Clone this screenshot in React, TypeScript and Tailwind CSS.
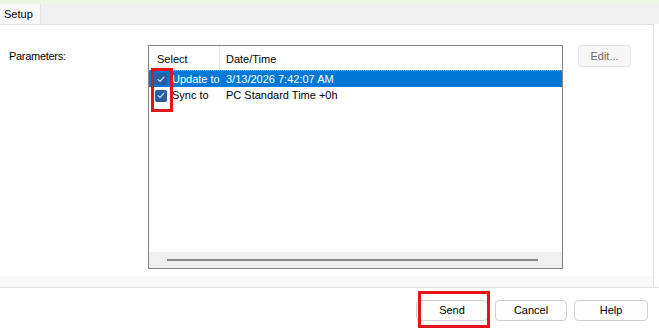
import React from "react";

function Check() {
  return (
    <div className="shrink-0 w-[12px] h-[12px] rounded-[2px] bg-[#2a5ca4] flex items-center justify-center">
      <svg width="8" height="7" viewBox="0 0 8 7" fill="none">
        <path d="M1 3.6 L3 5.4 L7 1.2" stroke="#dbe6f5" strokeWidth="1.2" strokeLinecap="round" strokeLinejoin="round" />
      </svg>
    </div>
  );
}

function Btn({ label, w }: { label: string; w: string }) {
  return (
    <div className={`${w} h-[21px] rounded-[4px] border border-[#d0d0d0] bg-[#fdfdfd] flex items-center justify-center text-[11px] text-black`}>
      {label}
    </div>
  );
}

export default function App() {
  return (
    <div
      className="relative w-[659px] h-[331px] bg-white overflow-hidden text-[11px] text-black leading-none whitespace-nowrap"
      style={{ fontFamily: '"Liberation Sans", Arial, sans-serif' }}
    >
      {/* top strip */}
      <div className="h-[4px] bg-[#eef7e1]" />
      {/* tab strip */}
      <div className="h-[20px] bg-[#f0f0f0] flex">
        <div className="w-[41px] h-full bg-[#f9f9f9] border-r border-[#e3e3e3] flex items-center pl-[4px]">
          Setup
        </div>
      </div>
      {/* panel */}
      <div className="w-[654px] h-[252px] border-t border-r border-[#e0e0e0] bg-white flex">
        <div className="w-[148px] pl-[9px] pt-[26px] tracking-[-0.3px]">Parameters:</div>
        <div className="pt-[20px]">
          <div className="w-[415px] h-[224px] border border-[#838383] bg-white flex flex-col">
            {/* header */}
            <div className="h-[24px] flex">
              <div className="w-[71px] border-r border-[#e5e5e5] flex items-center pl-[8px] pt-[3px]">Select</div>
              <div className="flex items-center pl-[6px] pt-[3px]">Date/Time</div>
            </div>
            {/* row 1 */}
            <div className="h-[17px] flex items-center bg-[#0078d7] text-white border-t border-dotted border-[#f0a050]">
              <div className="w-[6px] shrink-0" />
              <Check />
              <div className="w-[53px] pl-[5px] overflow-hidden">Update to</div>
              <div className="pl-[6px]">3/13/2026 7:42:07 AM</div>
            </div>
            {/* row 2 */}
            <div className="h-[17px] flex items-center">
              <div className="w-[6px] shrink-0" />
              <Check />
              <div className="w-[53px] pl-[5px] overflow-hidden">Sync to</div>
              <div className="pl-[6px]">PC Standard Time +0h</div>
            </div>
            <div className="flex-1" />
            {/* h scrollbar */}
            <div className="h-[16px] bg-[#f0f0f0] flex items-center pl-[18px] pr-[24px]">
              <div className="h-[2px] w-full bg-[#868686]" />
            </div>
          </div>
        </div>
        <div className="pl-[15px] pt-[20px]">
          <div className="w-[53px] h-[22px] rounded-[3px] border border-[#e5e5e5] bg-[#f7f7f7] flex items-center justify-center text-[#6d6d6d]">
            Edit...
          </div>
        </div>
      </div>
      {/* bottom strip */}
      <div className="w-[654px] h-[11px] bg-[#f9f9f9] border-r border-[#e0e0e0]" />
      <div className="h-[1px] bg-[#e3e3e3]" />
      {/* buttons */}
      <div className="flex justify-end gap-[7px] pr-[11px] pt-[12px]">
        <Btn label="Send" w="w-[72px]" />
        <Btn label="Cancel" w="w-[72px]" />
        <Btn label="Help" w="w-[74px]" />
      </div>
      {/* red annotations */}
      <div className="absolute left-[151px] top-[68px] w-[22px] h-[44px] border-[3px] border-[#e5141c]" />
      <div className="absolute left-[418px] top-[291px] w-[72px] h-[37px] border-[3px] border-[#e5141c]" />
    </div>
  );
}
